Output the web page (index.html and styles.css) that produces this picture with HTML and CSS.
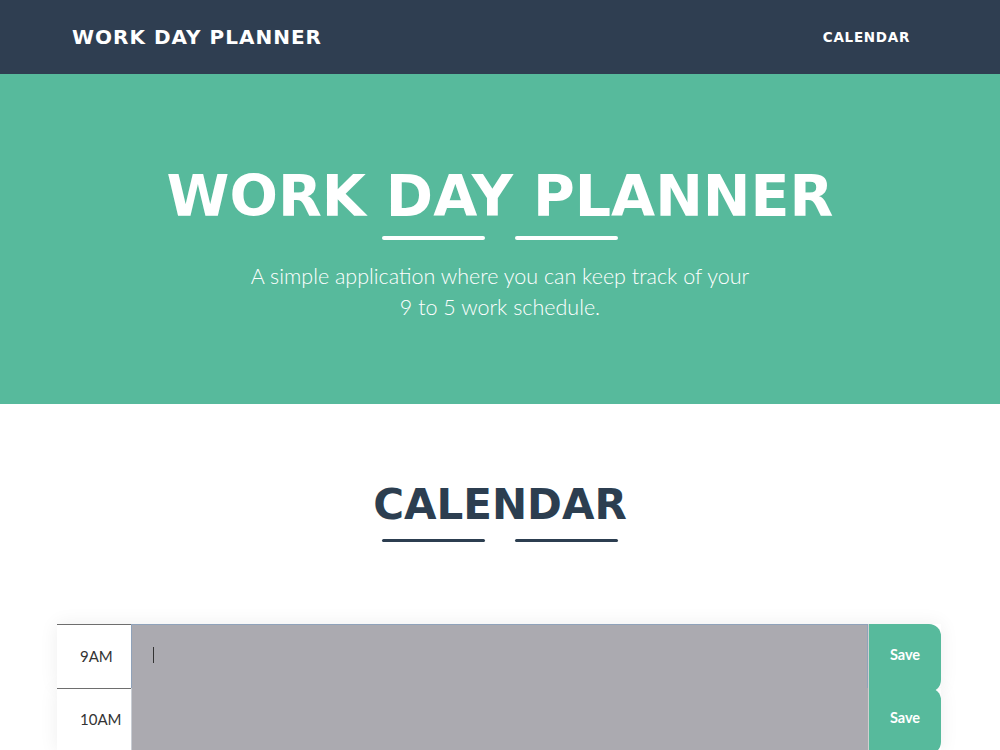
FILE: index.html
```html
<!DOCTYPE html>
<html lang="en">
<head>
<meta charset="utf-8">
<title>Work Day Planner</title>
<link rel="stylesheet" href="styles.css">
</head>
<body>
<nav class="navbar">
  <a class="brand" href="#">WORK DAY PLANNER</a>
  <a class="nav-link" href="#calendar">CALENDAR</a>
</nav>
<header class="hero">
  <h1 class="hero-title">WORK DAY PLANNER</h1>
  <div class="divider divider-light"><span></span><span></span></div>
  <p class="lead">A simple application where you can keep track of your<br>9 to 5 work schedule.</p>
</header>
<section class="calendar" id="calendar">
  <h2 class="section-title">CALENDAR</h2>
  <div class="divider divider-dark"><span></span><span></span></div>
  <div class="blocks">
    <div class="time-block">
      <div class="hour">9AM</div>
      <div class="desc-cell active">
        <textarea class="description past focused"></textarea>
      </div>
      <button class="save-btn">Save</button>
    </div>
    <div class="time-block">
      <div class="hour">10AM</div>
      <div class="desc-cell">
        <textarea class="description past"></textarea>
      </div>
      <button class="save-btn">Save</button>
    </div>
  </div>
</section>
</body>
</html>
```
FILE: styles.css
```css
* { box-sizing: border-box; }
html, body { margin: 0; padding: 0; }
body {
  font-family: Lato, "Open Sans", sans-serif;
  color: #2c3e50;
  background: #fff;
  overflow: hidden;
}
.navbar {
  height: 74px;
  background: #2f3e51;
  display: flex;
  align-items: center;
  justify-content: space-between;
  padding: 0 90px 0 72px;
}
.brand {
  font-family: "DejaVu Sans", sans-serif;
  font-weight: bold;
  font-size: 20px;
  color: #fff;
  text-decoration: none;
  letter-spacing: 1px;
}
.nav-link {
  font-family: "DejaVu Sans", sans-serif;
  font-weight: bold;
  font-size: 13.5px;
  color: #fff;
  text-decoration: none;
  letter-spacing: 0.7px;
}
.hero {
  height: 330px;
  background: #57ba9c;
  color: #fff;
  text-align: center;
  padding-top: 92px;
}
.hero-title {
  margin: 0;
  font-family: "DejaVu Sans", sans-serif;
  font-weight: bold;
  font-size: 57px;
  line-height: 60px;
}
.divider {
  display: flex;
  justify-content: center;
  gap: 30px;
  margin-top: 10px;
}
.divider span {
  display: block;
  width: 103px;
  height: 4px;
  border-radius: 2px;
}
.divider-light span { background: #fff; }
.divider-dark span { background: #2c3e50; height: 3px; }
.lead {
  margin: 21px 0 0;
  font-family: Lato, sans-serif;
  font-weight: 300;
  font-size: 21.5px;
  line-height: 31px;
}
.calendar {
  padding-top: 76px;
  text-align: center;
}
.section-title {
  margin: 0;
  font-family: "DejaVu Sans", sans-serif;
  font-weight: bold;
  font-size: 42px;
  line-height: 50px;
  color: #2c3e50;
}
.calendar .divider { margin-top: 9px; }
.blocks {
  width: 884px;
  margin: 82px 0 0 57px;
  text-align: left;
}
.time-block {
  display: grid;
  grid-template-columns: 74px 737px 73px;
  height: 63px;
  margin-bottom: 1px;
  box-shadow: 0 0 18px rgba(0, 0, 0, 0.07);
}
.hour {
  border-top: 1px solid #6e6e6e;
  background: #fff;
  padding: 0 0 6px 23px;
  display: flex;
  align-items: center;
  font-size: 15px;
  color: #333;
}
.desc-cell {
  position: relative;
  display: flex;
}
.description {
  flex: 1;
  border: none;
  border-left: 1px solid #c8cdd4;
  margin: 0;
  resize: none;
  padding: 14px 20px;
  font-family: Lato, sans-serif;
  font-size: 16px;
  color: #333;
  outline: none;
}
.past { background: #abaab0; }
.description.focused { border: 1px solid #8fa2ba; }
.desc-cell.active::after {
  content: "";
  position: absolute;
  left: 22px;
  top: 23px;
  width: 1px;
  height: 16px;
  background: #333;
}
.save-btn {
  border: none;
  border-left: 1px solid #d0d0d0;
  background: #57ba9c;
  color: #fff;
  font-family: Lato, sans-serif;
  font-weight: bold;
  font-size: 14.5px;
  padding: 0 0 7px;
  border-radius: 0 12px 12px 0;
  cursor: pointer;
}
```
